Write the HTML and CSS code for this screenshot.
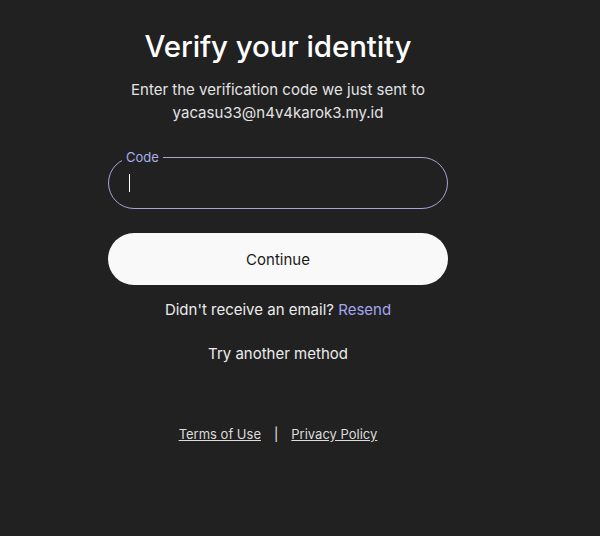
FILE: index.html
```html
<!DOCTYPE html>
<html lang="en">
<head>
    <meta charset="UTF-8">
    <meta name="viewport" content="width=device-width, initial-scale=1.0">
    <title>Verify your identity</title>
    <link rel="stylesheet" href="styles.css">
</head>
<body>
    <div class="page">
        <h1 class="title">Verify your identity</h1>
        <p class="subtitle">Enter the verification code we just sent to<br>yacasu33@n4v4karok3.my.id</p>

        <div class="field">
            <label class="field-label" for="code">Code</label>
            <div class="field-box">
                <span class="caret"></span>
                <input type="text" id="code" class="field-input">
            </div>
        </div>

        <button class="continue">Continue</button>

        <p class="resend">Didn't receive an email? <a href="#" class="resend-link">Resend</a></p>

        <a href="#" class="other-method">Try another method</a>

        <div class="footer">
            <a href="#" class="footer-link">Terms of Use</a>
            <span class="divider">|</span>
            <a href="#" class="footer-link">Privacy Policy</a>
        </div>
    </div>
</body>
</html>
```

FILE: styles.css
```css
body {
    margin: 0;
    background-color: #212121;
    font-family: Inter, "Noto Sans", sans-serif;
    color: #ececec;
    height: 536px;
}
.page {
    width: 340px;
    margin-left: 108px;
    padding-top: 28px;
    display: flex;
    flex-direction: column;
    align-items: center;
}
.title {
    margin: 0;
    font-size: 29.5px;
    font-weight: 500;
    color: #ffffff;
    line-height: 36px;
    letter-spacing: -0.1px;
}
.subtitle {
    margin: 14px 0 0;
    font-size: 15px;
    line-height: 23px;
    text-align: center;
    color: #e3e3e3;
}
.field {
    position: relative;
    width: 100%;
    margin-top: 33px;
}
.field-label {
    position: absolute;
    top: -8px;
    left: 14px;
    padding: 0 4px;
    background-color: #212121;
    color: #a9acec;
    font-size: 13px;
    line-height: 16px;
}
.field-box {
    height: 50px;
    border: 1px solid #a4a4d6;
    border-radius: 26px;
    display: flex;
    align-items: center;
    padding: 0 20px;
}
.caret {
    width: 1px;
    height: 18px;
    background-color: #ffffff;
}
.field-input {
    display: none;
}
.continue {
    width: 100%;
    height: 52px;
    margin-top: 24px;
    border: none;
    border-radius: 26px;
    background-color: #f9f9f9;
    color: #1a1a1a;
    font-family: inherit;
    font-size: 15px;
    cursor: pointer;
}
.resend {
    margin: 15px 0 0;
    font-size: 15px;
    line-height: 20px;
    color: #ececec;
}
.resend-link {
    color: #a3a6f2;
    text-decoration: none;
}
.other-method {
    margin-top: 24px;
    font-size: 15px;
    line-height: 20px;
    color: #ececec;
    text-decoration: none;
}
.footer {
    margin-top: 61px;
    display: flex;
    gap: 13px;
    font-size: 13px;
    line-height: 18px;
    color: #dcdcdc;
}
.footer-link {
    color: #dcdcdc;
    text-decoration: underline;
}
.divider {
    color: #ececec;
}
```
